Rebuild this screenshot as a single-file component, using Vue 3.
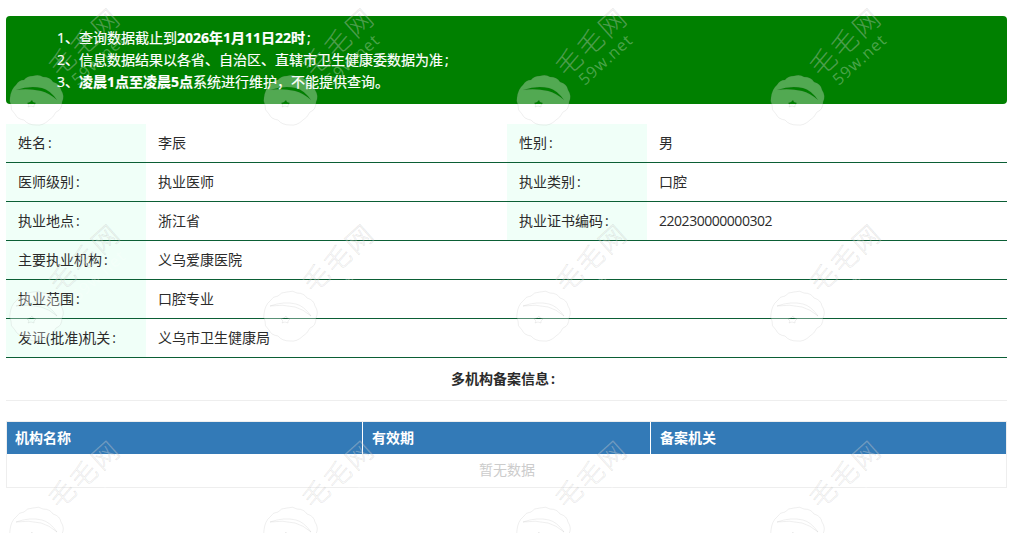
<script setup>
const rows = [
  [['姓名', '李辰'], ['性别', '男']],
  [['医师级别', '执业医师'], ['执业类别', '口腔']],
  [['执业地点', '浙江省'], ['执业证书编码', '220230000000302']],
  [['主要执业机构', '义乌爱康医院']],
  [['执业范围', '口腔专业']],
  [['发证(批准)机关', '义乌市卫生健康局']]
]
const tiles = Array.from({ length: 12 }, (_, i) => i)
const isNumber = (text) => /^\d+$/.test(text)
</script>

<template>
  <div class="page">
    <div class="notice">
      <p>1、查询数据截止到<b>2026年1月11日22时</b><span class="punct">;</span></p>
      <p>2、信息数据结果以各省、自治区、直辖市卫生健康委数据为准<span class="punct">;</span></p>
      <p>3、<b>凌晨1点至凌晨5点</b>系统进行维护，不能提供查询。</p>
    </div>

    <div class="info">
      <div v-for="(row, r) in rows" :key="r" class="info-row">
        <template v-for="(pair, c) in row" :key="c">
          <div class="label">{{ pair[0] }}<span class="punct">:</span></div>
          <div class="value" :class="{ half: row.length === 2 && c === 0, num: isNumber(pair[1]) }">{{ pair[1] }}</div>
        </template>
      </div>
    </div>

    <div class="subtitle">多机构备案信息<span class="punct">:</span></div>

    <div class="records">
      <div class="head">
        <div class="h1">机构名称</div>
        <div class="h2">有效期</div>
        <div class="h3">备案机关</div>
      </div>
      <div class="empty">暂无数据</div>
    </div>

    <div class="watermark">
      <svg v-for="t in tiles" :key="t" class="tile" viewBox="0 0 254 216" width="254" height="216">
        <text x="85" y="51" class="mark" text-anchor="middle" transform="rotate(-42 85 42)">毛毛网</text>
        <text x="99" y="65" class="net" text-anchor="middle" transform="rotate(-42 99 60)">59w.net</text>
        <path class="cloud" fill-rule="evenodd" d="M10 98Q11 89 16 85Q19 80 24 80Q27 76 33 76Q39 74 43 77Q50 77 53 82Q60 84 61 90Q65 96 62 102Q62 110 56 112Q53 118 49 120Q43 126 36 125Q28 125 24 120Q17 119 15 114Q10 110 11 105Q9 101 10 98ZM16 90Q30 85 42 88Q50 90 57 100Q49 93 41 91Q28 88 16 90ZM27 103L30 102L32 100L33 102L36 103L34 105L34 107L31 106L28 107L29 105Z"/>
      </svg>
    </div>
  </div>
</template>

<style scoped>
.page {
  position: relative;
  box-sizing: border-box;
  height: 533px;
  padding: 16px 7px 0 6px;
  overflow: hidden;
  font-family: "Open Sans", "Noto Sans CJK SC", sans-serif;
  font-size: 14px;
  color: #2b2b2b;
  background: #fff;
}
.punct {
  margin-left: 2px;
}
.notice {
  box-sizing: border-box;
  height: 88px;
  padding: 11px 51px;
  background: #008000;
  border-radius: 4px;
  color: #fff;
  -webkit-text-stroke: 0.2px #fff;
}
.notice p {
  margin: 0;
  line-height: 22px;
}
.info {
  margin-top: 20px;
}
.info-row {
  display: flex;
  height: 39px;
  box-sizing: border-box;
  border-bottom: 1px solid #0b5e35;
  line-height: 37px;
}
.label {
  flex: none;
  box-sizing: border-box;
  width: 140px;
  padding-left: 12px;
  background: #f0fff8;
}
.value {
  padding-left: 12px;
  flex: 1;
}
.value.half {
  flex: none;
  width: 361px;
  box-sizing: border-box;
}
.value.num {
  letter-spacing: -0.47px;
}
.subtitle {
  box-sizing: border-box;
  height: 43px;
  padding-right: 7px;
  line-height: 42px;
  text-align: center;
  font-weight: 700;
  border-bottom: 1px solid #eee;
}
.records {
  margin-top: 20px;
  border: 1px solid #eee;
}
.head {
  display: flex;
  height: 32px;
  line-height: 31px;
  background: #337ab7;
  color: #fff;
  font-weight: 700;
}
.head div {
  box-sizing: border-box;
  padding-left: 9px;
}
.h1 { width: 355px; padding-left: 8px !important; }
.h2 { width: 288px; border-left: 1px solid #fff; }
.h3 { flex: 1; border-left: 1px solid #fff; }
.empty {
  height: 33px;
  padding-left: 1px;
  line-height: 32px;
  text-align: center;
  color: #ccc;
}
.watermark {
  position: absolute;
  inset: 0;
  display: grid;
  grid-template-columns: repeat(4, 253.67px);
  grid-auto-rows: 216px;
  pointer-events: none;
}
.tile {
  display: block;
  overflow: visible;
}
.mark {
  font-family: "Noto Sans CJK SC", sans-serif;
  font-size: 26px;
  font-weight: 300;
  letter-spacing: 3px;
  fill: rgba(255, 255, 255, 0.3);
  stroke: rgba(110, 110, 110, 0.18);
  stroke-width: 0.6px;
}
.net {
  font-family: "Open Sans", sans-serif;
  font-size: 16px;
  letter-spacing: 1px;
  fill: rgba(255, 255, 255, 0.3);
}
.cloud {
  fill: rgba(255, 255, 255, 0.32);
  stroke: rgba(110, 110, 110, 0.16);
  stroke-width: 0.7px;
}
</style>
